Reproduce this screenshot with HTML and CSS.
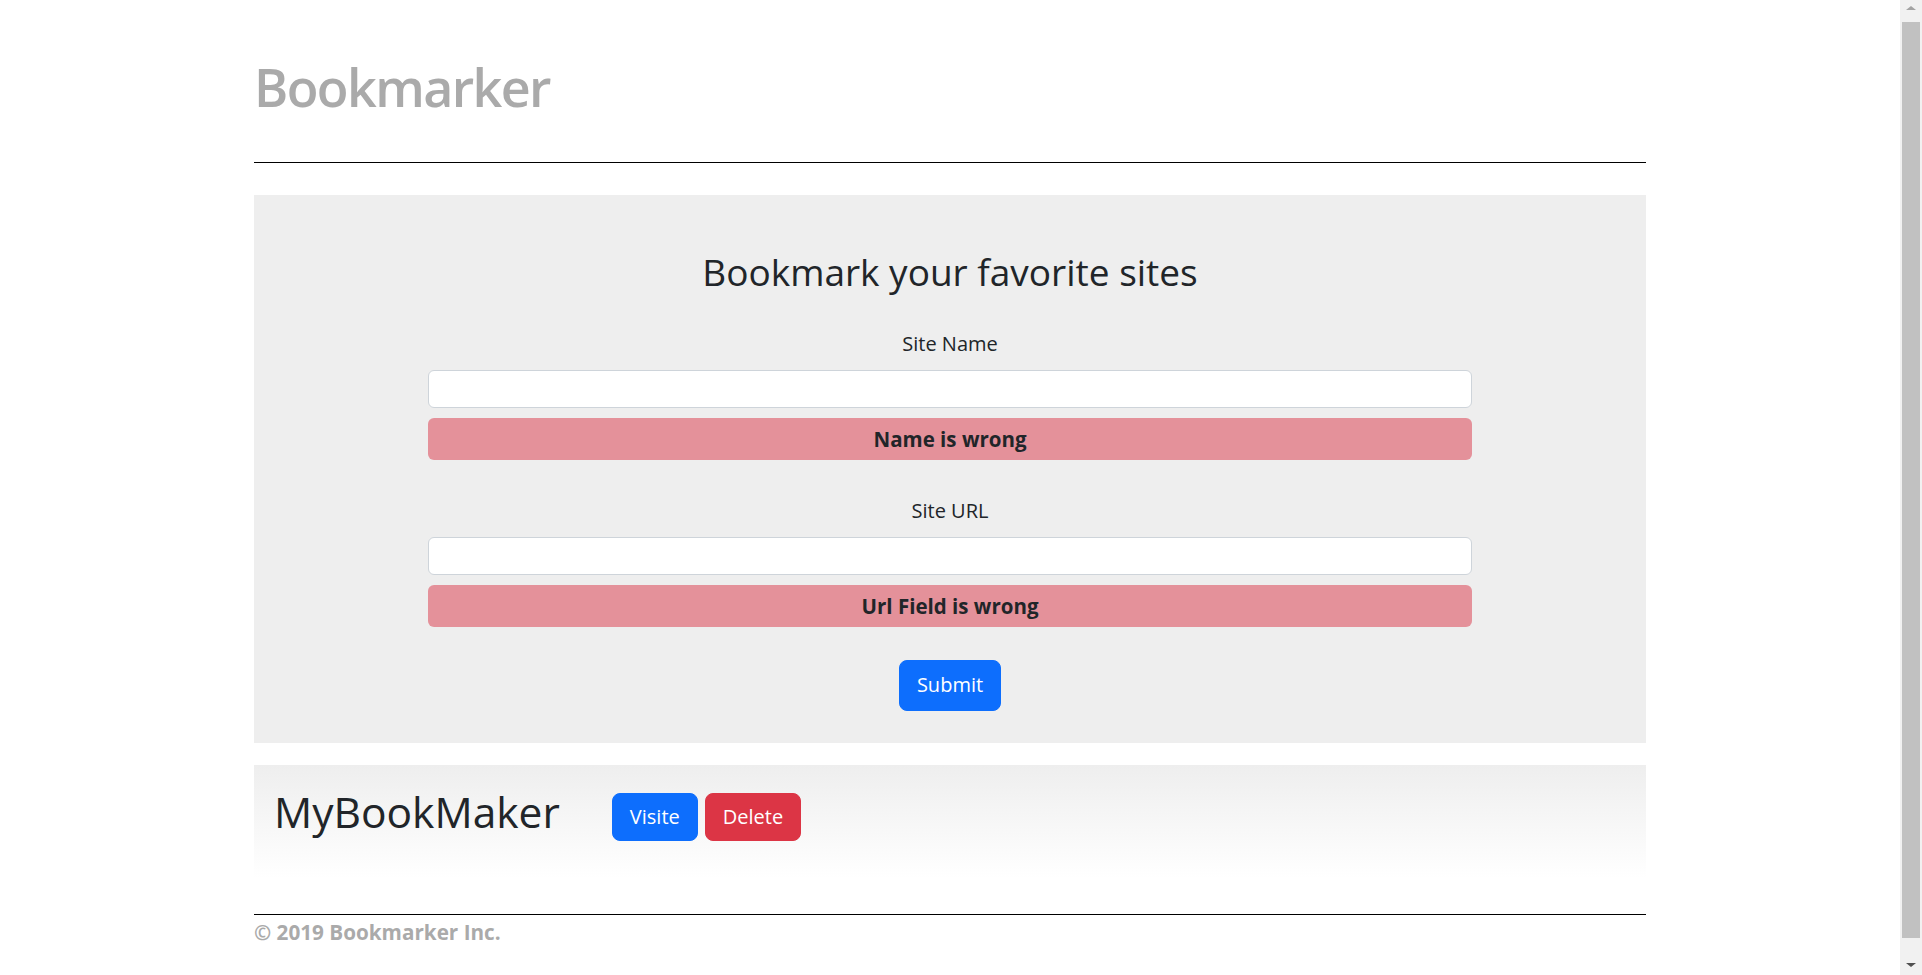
FILE: index.html
```html
<!DOCTYPE html>
<html lang="en">
<head>
<meta charset="utf-8">
<title>Bookmarker</title>
<link rel="stylesheet" href="styles.css">
</head>
<body>
<div class="container">
  <header class="site-header">
    <h1 class="brand">Bookmarker</h1>
  </header>
  <hr class="rule rule-top">

  <section class="jumbotron">
    <h2 class="jumbo-title">Bookmark your favorite sites</h2>
    <form class="bm-form">
      <div class="form-group">
        <label class="form-label" for="siteName">Site Name</label>
        <input class="form-control" type="text" id="siteName">
        <div class="alert">Name is wrong</div>
      </div>
      <div class="form-group">
        <label class="form-label" for="siteUrl">Site URL</label>
        <input class="form-control" type="text" id="siteUrl">
        <div class="alert">Url Field is wrong</div>
      </div>
      <button type="button" class="btn btn-primary btn-submit">Submit</button>
    </form>
  </section>

  <section class="bookmark-card">
    <h3 class="bookmark-name">MyBookMaker</h3>
    <div class="bookmark-actions">
      <button type="button" class="btn btn-primary">Visite</button>
      <button type="button" class="btn btn-danger">Delete</button>
    </div>
  </section>

  <footer class="site-footer">
    <hr class="rule">
    <p class="copyright">&copy; 2019 Bookmarker Inc.</p>
  </footer>
</div>

<div class="scrollbar" aria-hidden="true">
  <span class="sb-arrow sb-up"></span>
  <span class="sb-thumb"></span>
  <span class="sb-arrow sb-down"></span>
</div>
</body>
</html>
```
FILE: styles.css
```css
* {
  box-sizing: border-box;
}

body {
  margin: 0;
  padding-right: 22px;
  font-family: "Open Sans", "Noto Sans", "Liberation Sans", sans-serif;
  color: #212529;
  background: #fff;
}

.container {
  width: 1392px;
  margin: 0 auto;
}

.site-header {
  padding-top: 56px;
}

.brand {
  margin: 0;
  font-size: 52px;
  line-height: 62px;
  font-weight: 600;
  color: #aaaaaa;
  letter-spacing: -1.6px;
}

.rule {
  border: 0;
  border-top: 1px solid #000;
  margin: 0;
  height: 0;
}

.rule-top {
  margin-top: 44px;
  margin-bottom: 32px;
}

.jumbotron {
  background: #eeeeee;
  padding: 54px 0 32px;
  display: flex;
  flex-direction: column;
  align-items: center;
}

.jumbo-title {
  margin: 0 0 34px;
  font-size: 37px;
  line-height: 46px;
  font-weight: 500;
  color: #212529;
}

.bm-form {
  width: 75%;
  display: flex;
  flex-direction: column;
  align-items: center;
}

.form-group {
  width: 100%;
  display: flex;
  flex-direction: column;
  align-items: stretch;
  margin-bottom: 36px;
}

.form-group:last-of-type {
  margin-bottom: 33px;
}

.form-label {
  display: block;
  text-align: center;
  font-size: 20px;
  line-height: 30px;
  margin-bottom: 11px;
  color: #212529;
}

.form-control {
  display: block;
  width: 100%;
  height: 38px;
  border: 1px solid #ced4da;
  border-radius: 6px;
  background: #fff;
  font: inherit;
  font-size: 16px;
  padding: 6px 12px;
}

.alert {
  margin-top: 10px;
  background: #e4919a;
  border-radius: 6px;
  padding: 6px 12px;
  text-align: center;
  font-size: 20.5px;
  line-height: 30px;
  font-weight: 700;
  color: #212529;
}

.btn {
  font-family: inherit;
  font-size: 20px;
  line-height: 30px;
  padding: 9px 16px;
  border: 1px solid transparent;
  border-radius: 8px;
  color: #fff;
  cursor: pointer;
}

.btn-primary {
  background: #0d6efd;
  border-color: #0d6efd;
}

.btn-danger {
  background: #dc3545;
  border-color: #dc3545;
}

.btn-submit {
  padding: 9px 17px 10px;
}

.bookmark-card {
  margin-top: 22px;
  background: linear-gradient(#eeeeee, #ffffff);
  padding: 22px 20px 37px;
  display: flex;
  align-items: flex-start;
}

.bookmark-name {
  margin: 0 52px 0 0;
  font-size: 42.5px;
  line-height: 50px;
  font-weight: 400;
  color: #212529;
}

.bookmark-actions {
  display: flex;
  gap: 7px;
  margin-top: 6px;
}

.bookmark-actions .btn {
  padding: 8px 17px;
}

.site-footer {
  margin-top: 36px;
  padding-bottom: 40px;
}

.copyright {
  margin: 2px 0 0;
  font-size: 20.7px;
  line-height: 30px;
  font-weight: 700;
  color: #aaaaaa;
}

/* browser scrollbar look-alike, fixed at the right edge */
.scrollbar {
  position: fixed;
  top: 0;
  right: 0;
  bottom: 0;
  width: 22px;
  background: #f1f1f1;
}

.sb-thumb {
  position: absolute;
  left: 2px;
  right: 2px;
  top: 22px;
  bottom: 37px;
  background: #c1c1c1;
}

.sb-arrow {
  position: absolute;
  left: 6px;
  width: 0;
  height: 0;
  border-left: 5px solid transparent;
  border-right: 5px solid transparent;
}

.sb-up {
  top: 6px;
  border-bottom: 4px solid #a3a3a3;
}

.sb-down {
  bottom: 8px;
  border-top: 4px solid #505050;
}
```
